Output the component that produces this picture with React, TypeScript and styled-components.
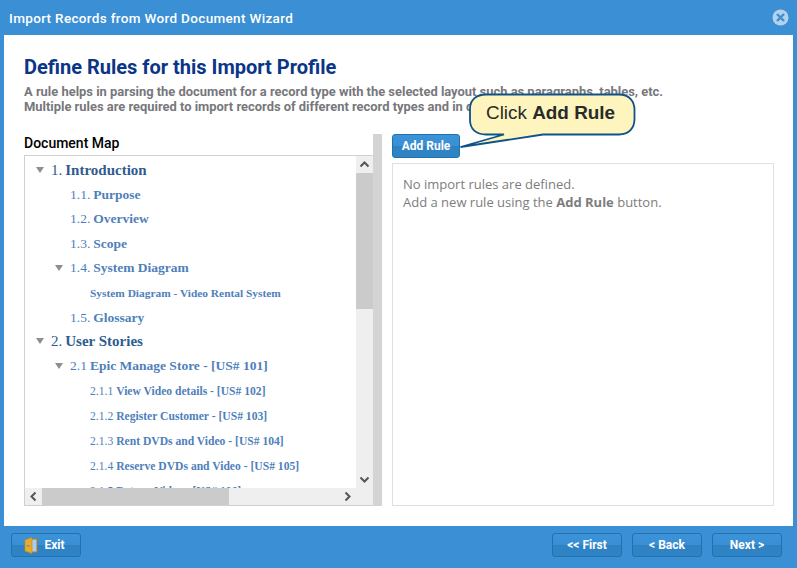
import React from "react";
import styled, { createGlobalStyle } from "styled-components";

const Global = createGlobalStyle`
  html, body { margin: 0; padding: 0; background: #3b8fd4; }
  * { box-sizing: border-box; }
`;

const Wizard = styled.div`
  width: 797px; height: 568px; background: #3b8fd4; display: flex; flex-direction: column;
  position: relative; overflow: hidden; font-family: Roboto, "Liberation Sans", sans-serif;
`;
const TitleBar = styled.header`
  height: 35px; flex: none; display: flex; align-items: center; justify-content: space-between;
  padding: 0 8px 0 9px;
`;
const TitleText = styled.div`
  color: #fff; font: 500 13.5px Roboto, sans-serif; letter-spacing: 0.33px;
`;
const Main = styled.main`
  height: 491px; flex: none; margin: 0 4px; background: #fff; padding: 20px 19px 20px 20px;
  display: flex; flex-direction: column;
`;
const Heading = styled.h1`
  margin: 0; font: 700 20px/24px Roboto, sans-serif; color: #0b3586;
`;
const Description = styled.p`
  margin: 5px 0 0; font: 700 12.92px/15px Roboto, sans-serif; color: #77777c; white-space: nowrap;
`;
const Columns = styled.div`
  margin-top: 20px; display: flex; gap: 10px; height: 372px;
`;
const LeftColumn = styled.section`
  width: 358px; flex: none; display: flex; position: relative;
`;
const MapPane = styled.div`
  width: 349px; flex: none; display: flex; flex-direction: column;
`;
const MapLabel = styled.div`
  height: 21px; font: 500 14px/18px Roboto, sans-serif; color: #000;
`;
const SideStrip = styled.div`
  width: 9px; flex: none; background: #d4d4d4;
`;
const MapBox = styled.div`
  flex: 1; min-height: 0; border: 1px solid #d0d0d0; border-right: 0;
  display: grid; grid-template-columns: 331px 17px; grid-template-rows: 332px 17px;
`;
const Tree = styled.div`
  overflow: hidden; background: #fff; padding-top: 4px;
  font-family: "Liberation Serif", serif; font-weight: 700;
`;
const Row = styled.div<{ $h: number; $indent: number; $size: number; $dark?: boolean }>`
  height: ${(p) => p.$h}px; padding-left: ${(p) => p.$indent}px; display: flex; align-items: flex-start;
  font-size: ${(p) => p.$size}px; line-height: 20px; color: ${(p) => (p.$dark ? "#2f5c8f" : "#4f7fba")}; white-space: nowrap;
  position: relative;
`;
const Num = styled.span`
  font-weight: 400; margin-right: 3px;
`;
const Caret = styled.span`
  position: absolute; top: 7px; margin-left: -15px; width: 0; height: 0;
  border-left: 4.5px solid transparent; border-right: 4.5px solid transparent; border-top: 6px solid #8e8e8e;
`;
const VScroll = styled.div`
  background: #efefef; display: flex; flex-direction: column;
`;
const VThumb = styled.div`
  width: 17px; height: 136px; background: #cbcbcb; flex: none;
`;
const ArrowBox = styled.div`
  width: 17px; height: 17px; flex: none; display: flex; align-items: center; justify-content: center;
  background: #efefef; color: #555;
`;
const VGap = styled.div`
  flex: 1;
`;
const HScroll = styled.div`
  background: #efefef; display: flex;
`;
const HThumb = styled.div`
  width: 187px; background: #cbcbcb; flex: none;
`;
const Corner = styled.div`
  background: #efefef;
`;
const RightColumn = styled.section`
  flex: 1; display: flex; flex-direction: column; gap: 5px;
`;
const BlueButton = styled.button<{ $w: number }>`
  width: ${(p) => p.$w}px; height: 24px; flex: none; padding: 0; border: 1px solid #1f72ae; border-radius: 3px;
  background: linear-gradient(#3c93d8 0%, #3a8fd3 50%, #2f82c2 52%, #2f84c6 100%);
  color: #fff; font: 700 12px Roboto, "Liberation Sans", sans-serif;
  display: flex; align-items: center; justify-content: center; gap: 6px;
`;
const ExitButton = styled(BlueButton)`
  padding-right: 3px;
`;
const RulesPanel = styled.div`
  flex: 1; border: 1px solid #e0e0e0; padding: 11px 10px; font: 400 13px/18px "Open Sans", sans-serif; color: #7d7d7d;
`;
const RulesLine = styled.div``;
const RulesStrong = styled.b`
  font-weight: 700;
`;
const Footer = styled.footer`
  flex: 1; display: flex; align-items: flex-start; justify-content: space-between; padding: 7px 15px 0 11px;
`;
const NavGroup = styled.div`
  display: flex; gap: 10px;
`;
const Callout = styled.div`
  position: absolute; left: 459px; top: 93px; width: 178px; height: 56px;
`;
const CalloutShape = styled.svg`
  position: absolute; left: 0; top: 0; display: block;
`;
const CalloutText = styled.div`
  position: absolute; left: 27px; top: 9px; font: 400 18.900px/22px "Liberation Sans", Arial, sans-serif; color: #2a2a2a; white-space: nowrap;
`;
const CalloutStrong = styled.b`
  font-weight: 700;
`;

const Chevron = ({ d }: { d: string }) => (
  <svg width="11" height="11" viewBox="0 0 11 11" fill="none" stroke="#555" strokeWidth="2">
    <path d={d} />
  </svg>
);

const CloseIcon = () => (
  <svg width="17" height="17" viewBox="0 0 17 17">
    <circle cx="8.5" cy="8.5" r="8" fill="#b4d2ec" />
    <path d="M5 5l7 7M12 5l-7 7" stroke="#3b8fd4" strokeWidth="2.4" />
  </svg>
);

const DoorIcon = () => (
  <svg width="14" height="17" viewBox="0 0 14 17">
    <rect x="6" y="2" width="7" height="13" fill="#a8d0ee" stroke="#b5751a" />
    <path d="M1 3l7-2.5v16L1 14z" fill="#e5ac2d" stroke="#c98c1c" strokeWidth="0.7" />
    <rect x="3" y="8" width="2.5" height="1.6" fill="#8c8c8c" />
  </svg>
);

type Item = { h: number; i: number; s: number; n: string; t: string; dark?: boolean; caret?: boolean };
const items: Item[] = [
  { h: 25, i: 26, s: 15, n: "1.", t: "Introduction", dark: true, caret: true },
  { h: 24, i: 45, s: 13.5, n: "1.1.", t: "Purpose" },
  { h: 25, i: 45, s: 13.5, n: "1.2.", t: "Overview" },
  { h: 24, i: 45, s: 13.5, n: "1.3.", t: "Scope" },
  { h: 25, i: 45, s: 13.5, n: "1.4.", t: "System Diagram", caret: true },
  { h: 25, i: 65, s: 11.4, n: "", t: "System Diagram - Video Rental System" },
  { h: 23, i: 45, s: 13.5, n: "1.5.", t: "Glossary" },
  { h: 25, i: 26, s: 15, n: "2.", t: "User Stories", dark: true, caret: true },
  { h: 26, i: 45, s: 13.5, n: "2.1", t: "Epic Manage Store - [US# 101]", caret: true },
  { h: 25, i: 65, s: 11.6, n: "2.1.1", t: "View Video details - [US# 102]" },
  { h: 25, i: 65, s: 11.6, n: "2.1.2", t: "Register Customer - [US# 103]" },
  { h: 25, i: 65, s: 11.6, n: "2.1.3", t: "Rent DVDs and Video - [US# 104]" },
  { h: 25, i: 65, s: 11.6, n: "2.1.4", t: "Reserve DVDs and Video - [US# 105]" },
  { h: 25, i: 65, s: 11.6, n: "2.1.5", t: "Return Video - [US# 106]" },
];

export default function App() {
  return (
    <Wizard>
      <Global />
      <TitleBar>
        <TitleText>Import Records from Word Document Wizard</TitleText>
        <CloseIcon />
      </TitleBar>
      <Main>
        <Heading>Define Rules for this Import Profile</Heading>
        <Description>
          A rule helps in parsing the document for a record type with the selected layout such as paragraphs, tables, etc.
          <br />
          Multiple rules are required to import records of different record types and in different formats.
        </Description>
        <Columns>
          <LeftColumn>
            <MapPane>
              <MapLabel>Document Map</MapLabel>
              <MapBox>
                <Tree>
                  {items.map((it) => (
                    <Row key={it.n + it.t} $h={it.h} $indent={it.i} $size={it.s} $dark={it.dark}>
                      {it.caret && <Caret />}
                      {it.n && <Num>{it.n}</Num>}
                      {it.t}
                    </Row>
                  ))}
                </Tree>
                <VScroll>
                  <ArrowBox><Chevron d="M1.5 7.5l4-4 4 4" /></ArrowBox>
                  <VThumb />
                  <VGap />
                  <ArrowBox><Chevron d="M1.5 3.5l4 4 4-4" /></ArrowBox>
                </VScroll>
                <HScroll>
                  <ArrowBox><Chevron d="M7.5 1.5l-4 4 4 4" /></ArrowBox>
                  <HThumb />
                  <VGap />
                  <ArrowBox><Chevron d="M3.5 1.5l4 4-4 4" /></ArrowBox>
                </HScroll>
                <Corner />
              </MapBox>
            </MapPane>
            <SideStrip />
          </LeftColumn>
          <RightColumn>
            <BlueButton $w={68}>Add Rule</BlueButton>
            <RulesPanel>
              <RulesLine>No import rules are defined.</RulesLine>
              <RulesLine>
                Add a new rule using the <RulesStrong>Add Rule</RulesStrong> button.
              </RulesLine>
            </RulesPanel>
          </RightColumn>
        </Columns>
      </Main>
      <Footer>
        <ExitButton $w={70}>
          <DoorIcon />
          Exit
        </ExitButton>
        <NavGroup>
          <BlueButton $w={70}>&lt;&lt; First</BlueButton>
          <BlueButton $w={70}>&lt; Back</BlueButton>
          <BlueButton $w={70}>Next &gt;</BlueButton>
        </NavGroup>
      </Footer>
      <Callout>
        <CalloutShape width="178" height="56" viewBox="0 0 178 56">
          <path
            d="M27 1.5H160C170 1.5 175.500 8 175.500 17V26C175.500 35 170 41.500 160 41.500H84L1.500 54L45 41.500H27C17 41.500 11 36 11 27V16C11 7 17 1.500 27 1.500Z"
            fill="#fdf5bd"
            stroke="#0f5288"
            strokeWidth="1.800"
          />
        </CalloutShape>
        <CalloutText>
          Click <CalloutStrong>Add Rule</CalloutStrong>
        </CalloutText>
      </Callout>
    </Wizard>
  );
}
